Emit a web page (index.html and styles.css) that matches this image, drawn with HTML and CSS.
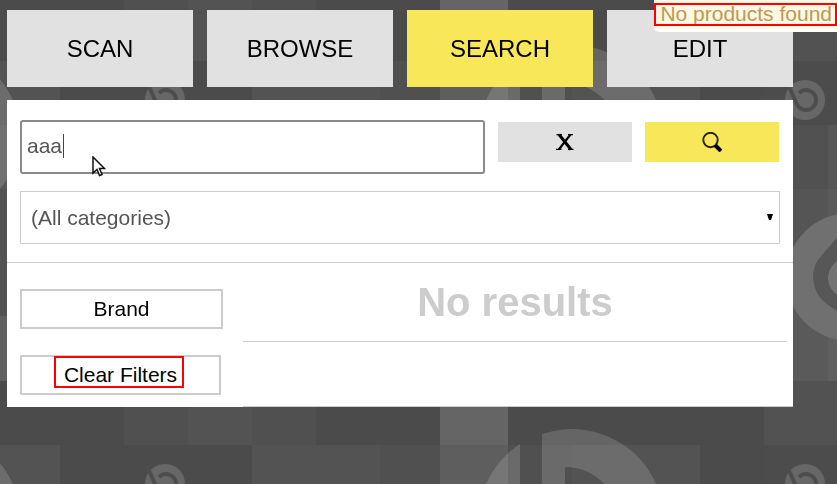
FILE: index.html
```html
<!DOCTYPE html>
<html lang="en">
<head>
<meta charset="UTF-8" />
<meta name="viewport" content="width=device-width, initial-scale=1" />
<title>Products - Search</title>
<link rel="stylesheet" href="styles.css">
</head>
<body>

<!-- Tiled backdrop -->
<svg class="backdrop" aria-hidden="true">
  <defs>
    <pattern id="tiles" x="-4" y="-3" width="640" height="384" patternUnits="userSpaceOnUse">
      <rect width="640" height="384" fill="#505050" />
      <g fill="#4b4b4b">
        <rect y="0" width="128" height="64" />
        <rect x="320" y="0" width="124" height="64" />
        <rect x="512" y="0" width="128" height="64" />
        <rect x="64" y="64" width="192" height="64" />
      </g>
      <g fill="#535353">
        <rect x="192" y="0" width="64" height="64" />
        <rect y="64" width="64" height="64" />
        <rect x="256" y="64" width="128" height="64" />
        <rect x="576" y="64" width="64" height="64" />
        <rect y="192" width="64" height="64" />
        <rect y="256" width="64" height="64" />
      </g>
      <rect y="128" width="64" height="64" fill="#585858" />
      <rect x="444" width="68" height="64" fill="#656565" />
      <rect x="444" y="64" width="68" height="64" fill="#5e5e5e" />
    </pattern>
    <pattern id="badge" x="145" y="80" width="640" height="384" patternUnits="userSpaceOnUse">
      <circle cx="20" cy="20" r="20" fill="#676767" />
      <path d="M2 2 L10 20 Q13 30 21 30 A10 10 0 0 0 21 10 Q17 10 14 13" fill="none" stroke="#4d4d4d" stroke-width="4" />
    </pattern>
    <g id="ring">
      <path d="M-51 -77 V77 A92 92 0 0 1 -51 -77 Z" />
      <path d="M-29 -87 A92 92 0 1 1 -29 87 Z M-6 -54 V54 A54 54 0 1 0 -6 -54 Z" fill-rule="evenodd" />
    </g>
  </defs>
  <rect width="100%" height="100%" fill="url(#tiles)" />

  <!-- left hand column -->
  <rect y="316" width="60" height="65" fill="#606060" />
  <g fill="#fff" fill-opacity=".15">
    <circle cx="-65" cy="134" r="85" />
    <circle cx="-65" cy="518" r="85" />
    <use href="#ring" x="571" y="137" />
    <use href="#ring" x="571" y="521" />
  </g>

  <!-- right hand column -->
  <rect x="764" y="-3" width="128" height="64" fill="#525252" />
  <rect x="764" y="61" width="128" height="64" fill="#4c4c4c" />
  <rect x="764" y="125" width="128" height="64" fill="#515151" />
  <rect x="764" y="189" width="128" height="63" fill="#555" />
  <rect x="764" y="252" width="128" height="129" fill="#5a5a5a" />
  <rect x="764" y="381" width="128" height="64" fill="#525252" />
  <rect x="764" y="445" width="128" height="64" fill="#4c4c4c" />
  <rect x="828" y="125" width="64" height="256" fill="#fff" fill-opacity=".03" />
  <circle cx="850" cy="277" r="64" fill="#707070" />
  <path d="M850 223 L822 255 Q813 264 813 277 Q814 300 838 311 L860 316 V223 Z" fill="#575757" />
  <path d="M850 247 L834 264 Q828 270 828 279 Q829 290 838 295 L860 300 V247 Z" fill="#747474" />
  <rect width="100%" height="100%" fill="url(#badge)" />
</svg>

<div class="notification" role="status">
  <p>No products found</p>
</div>

<div class="page">
  <nav>
    <button type="button">SCAN</button>
    <button type="button">BROWSE</button>
    <button type="button" class="active">SEARCH</button>
    <button type="button">EDIT</button>
  </nav>

  <main>
    <form class="search">
      <div class="search-row">
        <div class="search-field">
          <input type="text" id="searchInput" aria-label="Search products" value="aaa" autocomplete="off" />
          <span class="caret"></span>
          <svg class="pointer" viewBox="0 0 14 21" aria-hidden="true">
            <path d="M1 1 V17 L5 13.500 L7.500 19.500 L10 18.500 L7.500 12.500 H12.500 Z" fill="#fff" stroke="#111" stroke-width="1.500" />
          </svg>
        </div>
        <button type="button" class="icon-btn" aria-label="Clear search">
          <svg viewBox="0 0 20 20" aria-hidden="true">
            <path d="M1.500 2.600 H7 M13 2.600 H18 M1 17.400 H6.500 M13 17.400 H18.500" stroke="#000" stroke-width="1.300" />
            <path d="M4 2.500 L16 17.500" stroke="#000" stroke-width="3" />
            <path d="M15.500 2.500 L3.800 17.500" stroke="#000" stroke-width="2.200" />
          </svg>
        </button>
        <button type="submit" class="icon-btn active" aria-label="Search">
          <svg viewBox="0 0 20 20" aria-hidden="true">
            <circle cx="8.500" cy="8" r="7.200" fill="none" stroke="#222216" stroke-width="1.900" />
            <path d="M13 13 L19 19" stroke="#000" stroke-width="4" />
          </svg>
        </button>
      </div>
      <div class="category">
        <select id="categorySelect" aria-label="Category">
          <option>(All categories)</option>
        </select>
        <svg class="arrow" viewBox="0 0 6 6" aria-hidden="true"><path d="M0 0 H6 L4 6 H2 Z" /></svg>
      </div>
    </form>

    <div class="content">
      <aside>
        <button type="button">Brand</button>
        <button type="button" class="clear-filters">Clear Filters</button>
      </aside>
      <section class="results">
        <h1>No results</h1>
        <div class="results-footer"></div>
      </section>
    </div>
  </main>
</div>

</body>
</html>
```
FILE: styles.css
```css
*,
*::before,
*::after {
  box-sizing: border-box;
}
body {
  margin: 0;
  background: #505050;
  color: #000;
  font-family: "Liberation Sans", Arial, Helvetica, sans-serif;
  font-size: 21px;
}
button,
input,
select {
  margin: 0;
  padding: 0;
  border: none;
  border-radius: 0;
  color: inherit;
  font: inherit;
}
button {
  background: #e1e1e1;
  cursor: pointer;
}
button.active {
  background: #f8e759;
}
.backdrop {
  position: fixed;
  top: 0;
  left: 0;
  z-index: -1;
  width: 100%;
  height: 100%;
}
.page {
  padding: 10px 44px 10px 7px;
}

/* Notification */
.notification {
  position: fixed;
  top: 0;
  right: 0;
  padding: 0 0 3px 2px;
  background: #fff;
  border-radius: 0 0 0 5px;
}
.notification p {
  margin: 0;
  padding: 2px 5px 4px 4px;
  background: #fcf8e3;
  color: #c09853;
  line-height: 23px;
  white-space: nowrap;
}
.notification::after {
  content: "";
  position: absolute;
  top: 3px;
  right: 0;
  left: 0;
  height: 23px;
  border: 2px solid #f00;
}

/* Tabs */
nav {
  display: grid;
  grid-template-columns: repeat(4, 1fr);
  gap: 14px;
  margin-bottom: 13px;
}
nav button {
  height: 77px;
  font-size: 24px;
}

/* Search form */
main {
  background: #fff;
}
.search {
  padding: 20px 13px 18px;
  border-bottom: 1px solid #ccc;
}
.search-row {
  display: flex;
  gap: 13px;
  margin: 0 1px 17px 0;
}
.search-field {
  position: relative;
  flex: 1;
}
.search-field input {
  display: block;
  width: 100%;
  height: 54px;
  padding: 0 5px 2px;
  border: 2px solid #8a8a8a;
  border-radius: 3px;
  color: #555;
}
.caret {
  position: absolute;
  top: 14px;
  left: 43px;
  width: 1px;
  height: 24px;
  background: #444;
}
.pointer {
  position: absolute;
  top: 36px;
  left: 72px;
  width: 14px;
  height: 21px;
}
.icon-btn {
  display: flex;
  align-items: center;
  justify-content: center;
  width: 134px;
  height: 40px;
  margin-top: 2px;
}
.icon-btn svg {
  width: 20px;
  height: 20px;
}
.category {
  position: relative;
}
.category select {
  display: block;
  width: 100%;
  height: 53px;
  padding: 0 10px;
  border: 1px solid #ccc;
  background: #fff;
  color: #555;
  appearance: none;
}
.arrow {
  position: absolute;
  top: 23px;
  right: 7px;
  width: 6px;
  height: 6px;
}

/* Filters and results */
.content {
  display: flex;
  gap: 20px;
  padding: 0 6px 0 13px;
}
aside {
  display: flex;
  flex-direction: column;
  gap: 26px;
  width: 203px;
  padding: 26px 0 12px;
}
aside button {
  height: 40px;
  border: 2px solid #ccc;
  background: #fff;
}
.clear-filters {
  position: relative;
  margin-right: 2px;
}
.clear-filters::after {
  content: "";
  position: absolute;
  top: -1px;
  left: 32px;
  width: 130px;
  height: 32px;
  border: 2px solid #f00;
}
.results {
  display: flex;
  flex: 1;
  flex-direction: column;
}
.results h1 {
  margin: 0;
  border-bottom: 1px solid #ccc;
  color: #ccc;
  font-size: 40px;
  line-height: 78px;
  text-align: center;
}
.results-footer {
  flex: 1;
  margin-right: -6px;
  border-bottom: 1px solid #ccc;
}
```
